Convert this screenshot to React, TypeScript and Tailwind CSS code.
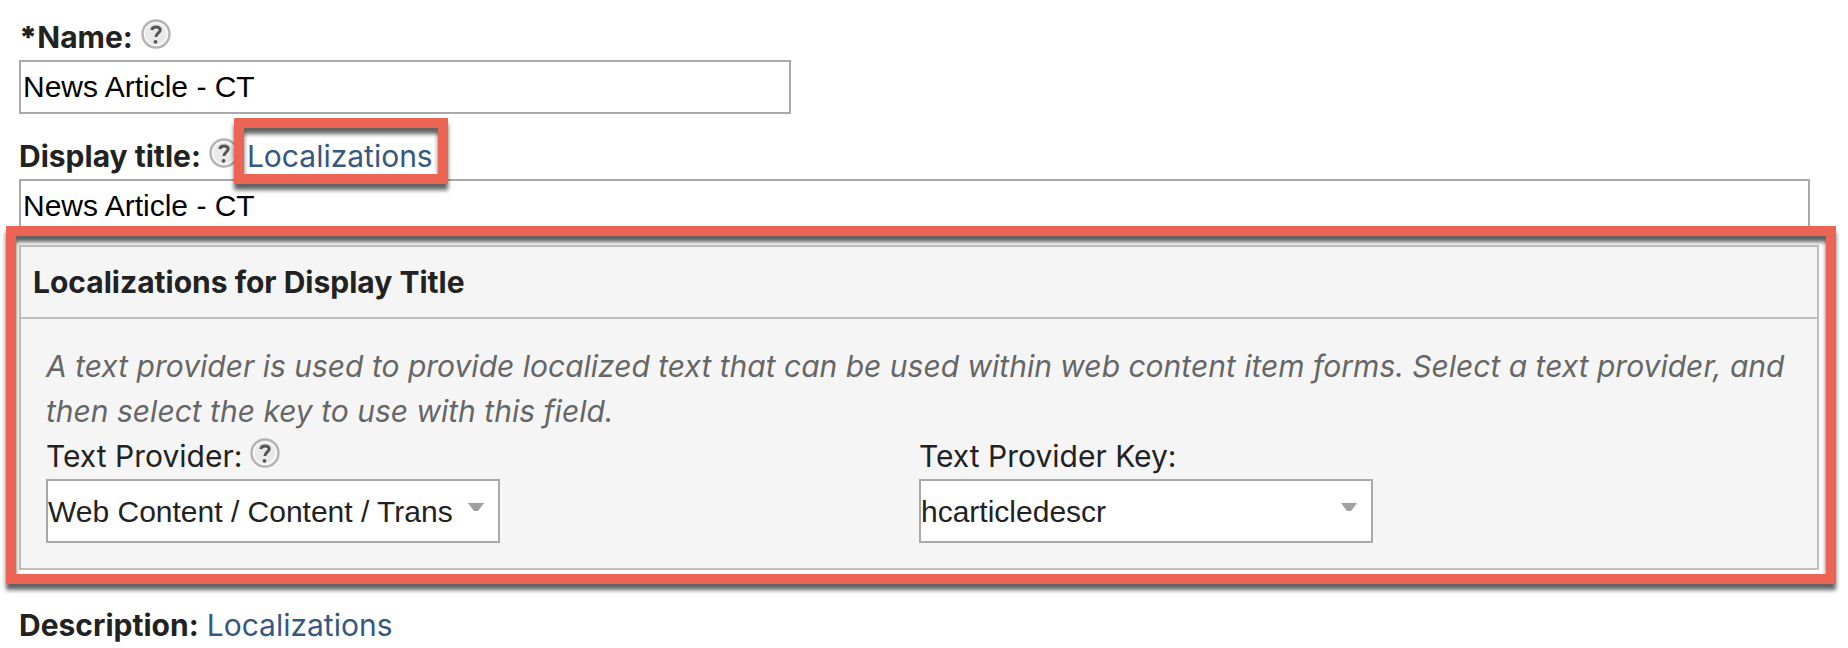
import React from 'react';

const HelpIcon: React.FC = () => (
  <svg
    width="30"
    height="30"
    viewBox="0 0 30 30"
    className="mt-1 shrink-0"
    aria-label="Help"
  >
    <circle
      cx="15"
      cy="15"
      r="13.5"
      fill="#f8f8f8"
      stroke="#b5b3b2"
      strokeWidth="2.4"
    />
    <circle cx="15" cy="15" r="10.6" fill="#e9e9e9" />
    <path
      d="M10.8 11c.3-2 1.8-3 4.2-3 2.6 0 4.2 1.1 4.2 3.1 0 2.7-4.1 3-4.3 6.900"
      fill="none"
      stroke="#555555"
      strokeWidth="3"
    />
    <circle cx="14.5" cy="22.8" r="1.9" fill="#555555" />
  </svg>
);

const Frame: React.FC<{ className: string }> = ({ className }) => (
  <span
    className={`pointer-events-none absolute border-10 border-[#ec6453] drop-shadow-[0_6px_2px_rgba(0,0,0,0.62)] ${className}`}
  />
);

interface SelectProps {
  id: string;
  label: string;
  value: string;
  help?: boolean;
}

const SelectField: React.FC<SelectProps> = ({ id, label, value, help }) => (
  <div>
    <div className="flex items-start gap-2">
      <label htmlFor={id}>{label}</label>
      {help && <HelpIcon />}
    </div>
    <div className="relative w-[454px] max-w-full">
      <select
        id={id}
        className="block h-16 w-full appearance-none border-2 border-[#a9a9a9] bg-white pr-10 font-['Liberation_Sans',Arial,sans-serif] text-[30px] text-[#222222]"
      >
        <option>{value}</option>
      </select>
      <svg
        width="16"
        height="8"
        viewBox="0 0 16 8"
        className="pointer-events-none absolute top-6 right-4"
      >
        <path d="M0 0h16L10 8H6z" fill="#a0a0a0" />
      </svg>
    </div>
  </div>
);

const inputClass =
  "block h-[54px] border-2 border-[#a9a9a9] bg-white px-0.5 font-['Liberation_Sans',Arial,sans-serif] text-[30px] text-black";

const App: React.FC = () => {
  return (
    <main className="bg-white pt-[15px] pr-[29px] pl-[19px] font-[Inter,sans-serif] text-[30px] leading-[45px] text-[#222222]">
      <div className="flex items-start gap-2">
        <label htmlFor="name" className="font-bold">
          <span className="font-black">*</span>Name:
        </label>
        <HelpIcon />
      </div>
      <input
        id="name"
        type="text"
        defaultValue="News Article - CT"
        className={`${inputClass} w-[772px] max-w-full`}
      />

      <div className="mt-5 flex items-start gap-2">
        <label htmlFor="display-title" className="font-bold">
          Display title:
        </label>
        <HelpIcon />
        <a href="#localizations" className="relative z-10 text-[#365880]">
          Localizations
          <Frame className="-top-4 -right-[15px] -bottom-[5px] -left-[13px]" />
        </a>
      </div>
      <div className="pr-[9px]">
        <input
          id="display-title"
          type="text"
          defaultValue="News Article - CT"
          className={`${inputClass} w-full`}
        />
      </div>

      <section
        id="localizations"
        className="relative mt-3 border-2 border-[#bebebe] bg-[#f5f5f5]"
      >
        <h2 className="border-b-2 border-[#bebebe] px-3 pt-[13px] pb-3 font-bold">
          Localizations for Display Title
        </h2>
        <div className="p-[25px]">
          <p className="text-[#666666] italic">
            A text provider is used to provide localized text that can be used
            within web content item forms. Select a text provider, and then
            select the key to use with this field.
          </p>
          <div className="grid grid-cols-2">
            <SelectField
              id="text-provider"
              label="Text Provider:"
              value="Web Content / Content / Trans"
              help
            />
            <SelectField
              id="text-provider-key"
              label="Text Provider Key:"
              value="hcarticledescr"
            />
          </div>
        </div>
        <Frame className="-top-[21px] -right-[19px] -bottom-4 -left-[15px]" />
      </section>

      <div className="mt-[33px] flex items-start gap-2">
        <span className="font-bold">Description:</span>
        <a href="#description" className="text-[#365880]">
          Localizations
        </a>
      </div>
    </main>
  );
};

export default App;
